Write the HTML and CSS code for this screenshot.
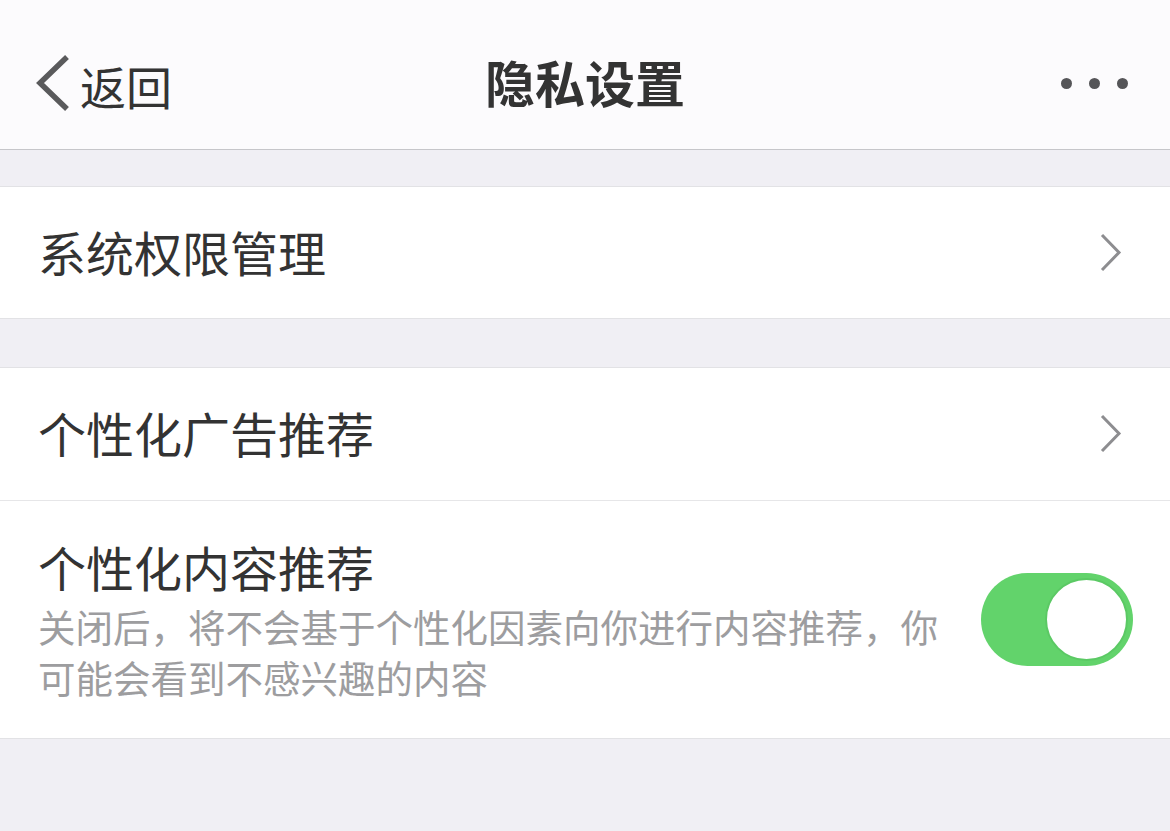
FILE: index.html
```html
<!DOCTYPE html>
<html lang="zh-CN">
<head>
<meta charset="utf-8">
<title>隐私设置</title>
<link rel="stylesheet" href="styles.css">
</head>
<body>
<header class="navbar">
  <div class="nav-left">
    <svg class="back-icon" width="40" height="60" viewBox="0 0 40 60">
      <polyline points="32,2 5,28 32,54" fill="none" stroke="#5a5a5c" stroke-width="5.5" stroke-linecap="butt" stroke-linejoin="miter"/>
    </svg>
    <span class="back-text">返回</span>
  </div>
  <h1 class="nav-title">隐私设置</h1>
  <div class="nav-right">
    <span class="dot"></span><span class="dot"></span><span class="dot"></span>
  </div>
</header>

<section class="group group-first">
  <div class="cell">
    <span class="cell-title">系统权限管理</span>
    <svg class="arrow" width="24" height="40" viewBox="0 0 24 40">
      <polyline points="3,2 20,19.5 3,37" fill="none" stroke="#8d8d90" stroke-width="3"/>
    </svg>
  </div>
</section>

<section class="group group-second">
  <div class="cell cell-divided">
    <span class="cell-title">个性化广告推荐</span>
    <svg class="arrow" width="24" height="40" viewBox="0 0 24 40">
      <polyline points="3,2 20,19.5 3,37" fill="none" stroke="#8d8d90" stroke-width="3"/>
    </svg>
  </div>
  <div class="cell cell-switch">
    <div class="cell-body">
      <div class="cell-title">个性化内容推荐</div>
      <div class="cell-desc">关闭后，将不会基于个性化因素向你进行内容推荐，你可能会看到不感兴趣的内容</div>
    </div>
    <div class="switch"><span class="knob"></span></div>
  </div>
</section>
</body>
</html>
```
FILE: styles.css
```css
html, body {
  margin: 0;
  padding: 0;
}
body {
  background: #f0eff4;
  font-family: "Noto Sans CJK SC", "Noto Sans", sans-serif;
  color: #333333;
  width: 1170px;
  min-height: 831px;
}
.navbar {
  height: 139px;
  padding-top: 10px;
  background: #fcfbfd;
  border-bottom: 1px solid #c6c6ca;
  display: grid;
  grid-template-columns: 1fr auto 1fr;
  align-items: center;
}
.nav-left {
  display: flex;
  align-items: center;
  padding-left: 35px;
  padding-top: 10px;
}
.back-icon {
  display: block;
  margin-right: 5px;
}
.back-text {
  font-size: 46px;
  line-height: 60px;
  color: #333;
}
.nav-title {
  margin: 0;
  font-size: 50px;
  font-weight: 700;
  line-height: 60px;
  color: #333;
  padding-top: 2px;
}
.nav-right {
  display: flex;
  justify-content: flex-end;
  align-items: center;
  gap: 17px;
  padding-right: 42px;
  padding-top: 8px;
}
.dot {
  width: 11px;
  height: 11px;
  border-radius: 50%;
  background: #555558;
}
.group {
  background: #ffffff;
  border-top: 1px solid #e2e2e5;
  border-bottom: 1px solid #e2e2e5;
}
.group-first {
  margin-top: 36px;
}
.group-second {
  margin-top: 48px;
}
.cell {
  display: flex;
  align-items: center;
  justify-content: space-between;
  padding-left: 38px;
  padding-right: 47px;
}
.group-first .cell {
  height: 131px;
}
.cell-divided {
  height: 132px;
  border-bottom: 1px solid #e6e6e8;
}
.cell-title {
  font-size: 48px;
  line-height: 60px;
  color: #333;
}
.group-first .cell-title,
.cell-divided .cell-title {
  padding-bottom: 4px;
}
.arrow {
  display: block;
}
.cell-switch {
  padding-top: 35px;
  padding-bottom: 36px;
  padding-right: 37px;
  align-items: center;
}
.cell-body {
  width: 922px;
}
.cell-desc {
  margin-top: 4px;
  font-size: 37.5px;
  line-height: 51px;
  color: #9d9d9f;
}
.switch {
  width: 152px;
  height: 93px;
  border-radius: 47px;
  background: #62d36b;
  position: relative;
  flex-shrink: 0;
}
.knob {
  position: absolute;
  right: 5px;
  top: 5px;
  width: 83px;
  height: 83px;
  border-radius: 50%;
  background: #ffffff;
  box-sizing: border-box;
  border: 2px solid #5bc964;
}
```
